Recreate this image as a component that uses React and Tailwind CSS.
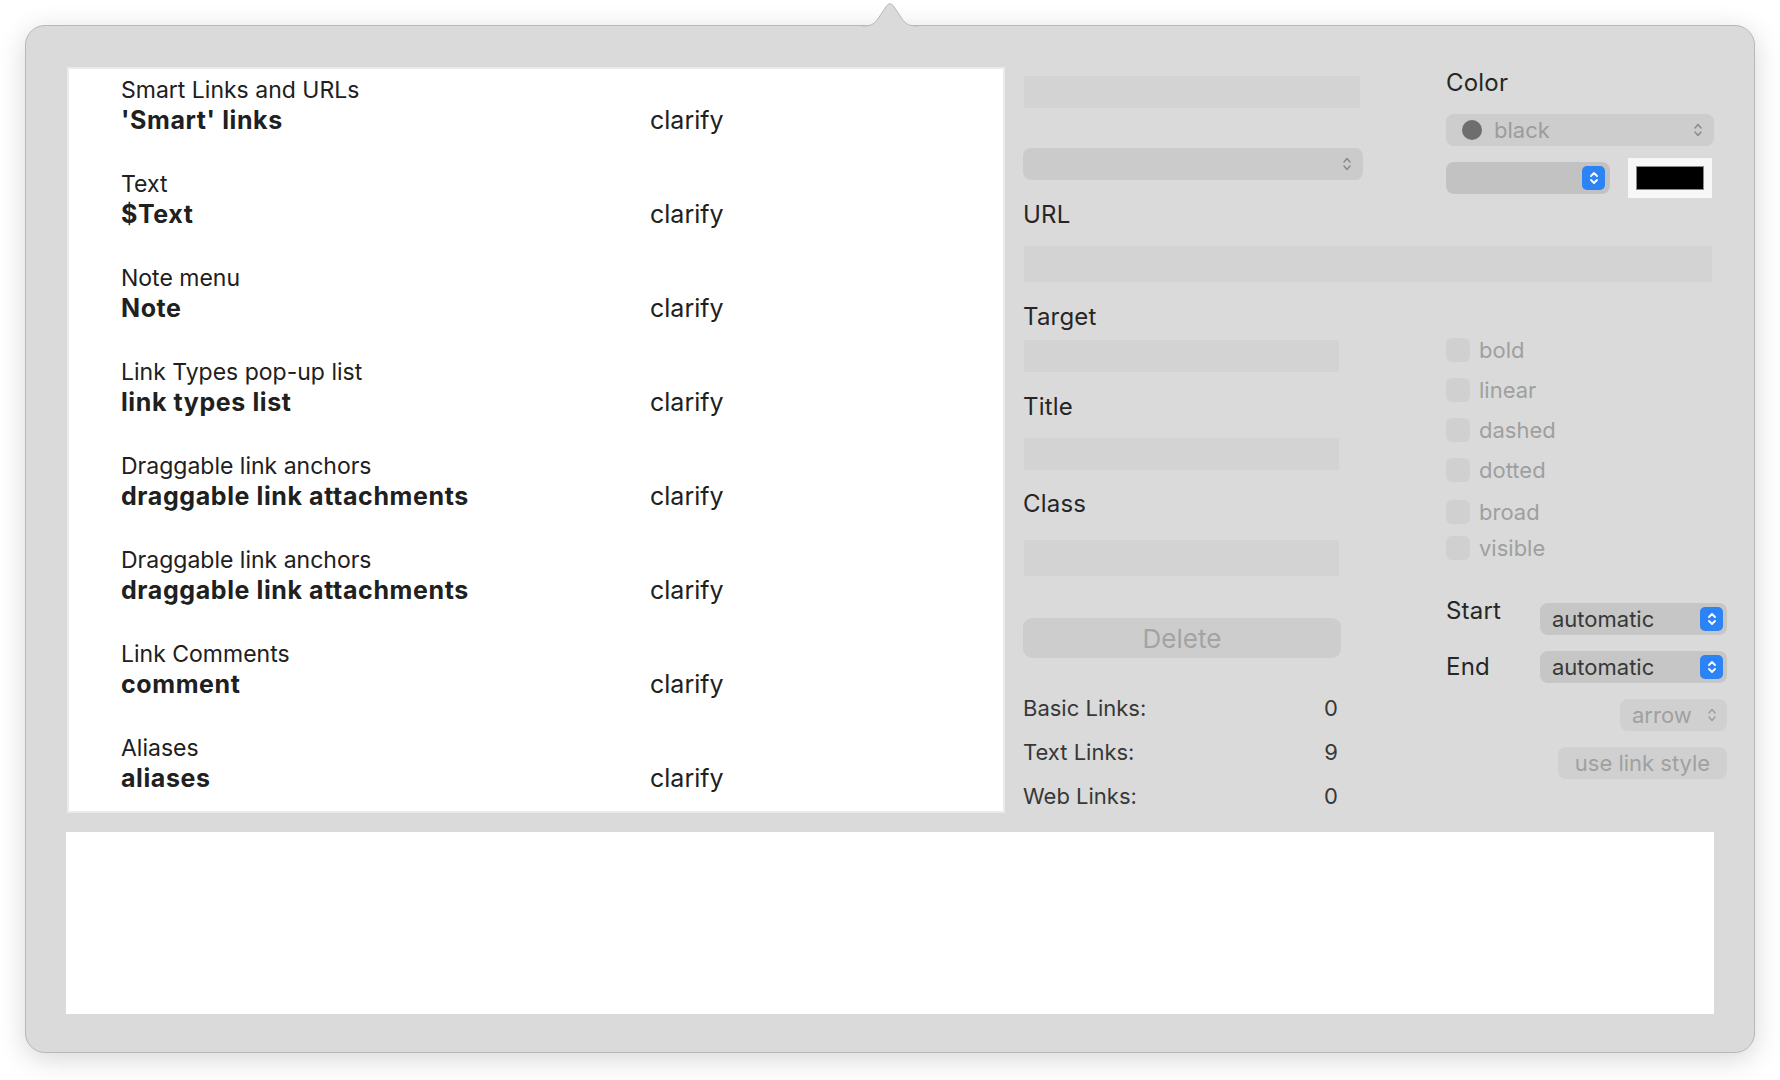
import React from 'react';

const rows = [
    { label: 'Smart Links and URLs', name: "'Smart' links" },
    { label: 'Text', name: '$Text' },
    { label: 'Note menu', name: 'Note' },
    { label: 'Link Types pop-up list', name: 'link types list' },
    { label: 'Draggable link anchors', name: 'draggable link attachments' },
    { label: 'Draggable link anchors', name: 'draggable link attachments' },
    { label: 'Link Comments', name: 'comment' },
    { label: 'Aliases', name: 'aliases' },
];

const styles = [
    { name: 'bold', mt: 'mt-[56px]' },
    { name: 'linear', mt: 'mt-[16px]' },
    { name: 'dashed', mt: 'mt-[16px]' },
    { name: 'dotted', mt: 'mt-[16px]' },
    { name: 'broad', mt: 'mt-[18px]' },
    { name: 'visible', mt: 'mt-[12px]' },
];

function Chevrons({ className = '' }) {
    return (
        <svg className={className} width="10" height="18" viewBox="0 0 10 18" fill="none">
            <path d="M2 7L5 3.5L8 7" stroke="currentColor" strokeWidth="1.6" strokeLinecap="round" strokeLinejoin="round" />
            <path d="M2 11L5 14.5L8 11" stroke="currentColor" strokeWidth="1.6" strokeLinecap="round" strokeLinejoin="round" />
        </svg>
    );
}

function BlueStepper() {
    return (
        <div className="w-[23px] h-[24px] rounded-[5px] bg-[#2b83f6] flex items-center justify-center text-white">
            <svg width="10" height="16" viewBox="0 0 10 16" fill="none">
                <path d="M2 6L5 3L8 6" stroke="currentColor" strokeWidth="1.8" strokeLinecap="round" strokeLinejoin="round" />
                <path d="M2 10L5 13L8 10" stroke="currentColor" strokeWidth="1.8" strokeLinecap="round" strokeLinejoin="round" />
            </svg>
        </div>
    );
}

function Label({ children, className = '' }) {
    return <div className={`text-[24px] leading-[30px] text-[#262626] tracking-[0.2px] ${className}`}>{children}</div>;
}

function Field({ className = '' }) {
    return <div className={`bg-[#d3d3d3] ${className}`}></div>;
}

export default function App() {
    return (
        <div className="w-[1780px] h-[1080px] bg-white pt-[25px] pl-[25px] font-['Inter',sans-serif]">
            {/* popover panel */}
            <div className="relative w-[1730px] h-[1028px] bg-[#dadada] border border-[#b8b8b8] rounded-[20px] shadow-[0_6px_28px_rgba(0,0,0,0.16)] pt-[41px] pl-[40px]">
                <svg className="absolute left-[836px] top-[-24px]" width="56" height="25" viewBox="0 0 56 25">
                    <path d="M0 25V24C8 24 12 23 16.5 16L24.5 4Q28 -0.5 31.5 4L39.5 16C44 23 48 24 56 24V25Z" fill="#dadada" />
                    <path d="M0 24C8 24 12 23 16.5 16L24.5 4Q28 -0.5 31.5 4L39.5 16C44 23 48 24 56 24" fill="none" stroke="#b8b8b8" strokeWidth="1" />
                </svg>

                <div className="flex items-start h-[746px]">
                    {/* link list */}
                    <div className="ml-[1px] w-[938px] h-[746px] bg-white border-2 border-[#ebebeb] pl-[52px] pt-[6px] text-[#202020]">
                        {rows.map((row, i) => (
                            <div key={i} className="h-[94px]">
                                <div className="text-[23px] leading-[30px]">{row.label}</div>
                                <div className="flex leading-[30px]">
                                    <div className="w-[529px] text-[25px] font-bold tracking-[0.6px]">{row.name}</div>
                                    <div className="text-[25px]">clarify</div>
                                </div>
                            </div>
                        ))}
                    </div>

                    {/* inspector */}
                    <div className="ml-[18px] w-[704px]">
                        <div className="flex h-[133px]">
                            <div className="w-[340px]">
                                <Field className="mt-[9px] ml-[1px] w-[336px] h-[32px]" />
                                <div className="mt-[40px] w-[340px] h-[32px] rounded-[8px] bg-[#cbcbcb] flex items-center justify-end pr-[11px] text-[#8c8c8c]">
                                    <Chevrons />
                                </div>
                            </div>
                            <div className="ml-auto w-[281px]">
                                <Label className="mt-[1px]">Color</Label>
                                <div className="mt-[16px] w-[268px] h-[32px] rounded-[8px] bg-[#cdcdcd] flex items-center pl-[16px] pr-[11px]">
                                    <div className="w-[20px] h-[20px] rounded-full bg-[#6e6e6e]"></div>
                                    <div className="ml-[12px] text-[22px] text-[#9c9c9c]">black</div>
                                    <Chevrons className="ml-auto text-[#8c8c8c]" />
                                </div>
                                <div className="mt-[12px] flex items-center">
                                    <div className="w-[164px] h-[32px] rounded-[8px] bg-[#c2c2c2] flex items-center justify-end pr-[5px]">
                                        <BlueStepper />
                                    </div>
                                    <div className="ml-[18px] w-[84px] h-[40px] bg-[#f7f7f7] px-[8px] py-[8px]">
                                        <div className="w-full h-full bg-black border border-[#8a8a8a]"></div>
                                    </div>
                                </div>
                            </div>
                        </div>

                        <Label>URL</Label>
                        <Field className="mt-[16px] ml-[1px] w-[688px] h-[36px]" />

                        <div className="flex">
                            <div className="w-[340px]">
                                <Label className="mt-[20px]">Target</Label>
                                <Field className="mt-[8px] ml-[1px] w-[315px] h-[32px]" />
                                <Label className="mt-[20px]">Title</Label>
                                <Field className="mt-[16px] ml-[1px] w-[315px] h-[32px]" />
                                <Label className="mt-[19px]">Class</Label>
                                <Field className="mt-[21px] ml-[1px] w-[315px] h-[36px]" />
                                <div className="mt-[42px] w-[318px] h-[40px] rounded-[9px] bg-[#cdcdcd] flex items-center justify-center text-[26px] text-[#a3a3a3]">
                                    Delete
                                </div>
                                <div className="mt-[28px] w-[315px] text-[22px] leading-[44px] text-[#383838]">
                                    <div className="flex justify-between"><span>Basic Links:</span><span>0</span></div>
                                    <div className="flex justify-between"><span>Text Links:</span><span>9</span></div>
                                    <div className="flex justify-between"><span>Web Links:</span><span>0</span></div>
                                </div>
                            </div>

                            <div className="ml-auto w-[281px] flex flex-col">
                                {styles.map((s) => (
                                    <div key={s.name} className={`${s.mt} h-[24px] flex items-center`}>
                                        <div className="w-[24px] h-[24px] rounded-[6px] bg-[#d0d0d0]"></div>
                                        <div className="ml-[9px] text-[22px] text-[#9f9f9f]">{s.name}</div>
                                    </div>
                                ))}
                                <div className="mt-[43px] flex items-start justify-between">
                                    <Label className="-mt-[7px]">Start</Label>
                                    <div className="w-[187px] h-[32px] rounded-[8px] bg-[#c6c6c6] flex items-center pl-[12px] pr-[4px] text-[22px] text-[#383838]">
                                        automatic
                                        <div className="ml-auto"><BlueStepper /></div>
                                    </div>
                                </div>
                                <div className="mt-[16px] flex items-center justify-between">
                                    <Label>End</Label>
                                    <div className="w-[187px] h-[32px] rounded-[8px] bg-[#c6c6c6] flex items-center pl-[12px] pr-[4px] text-[22px] text-[#383838]">
                                        automatic
                                        <div className="ml-auto"><BlueStepper /></div>
                                    </div>
                                </div>
                                <div className="mt-[16px] self-end w-[107px] h-[32px] rounded-[8px] bg-[#d0d0d0] flex items-center pl-[12px] pr-[10px] text-[22px] text-[#a0a0a0]">
                                    arrow
                                    <Chevrons className="ml-auto text-[#a0a0a0]" />
                                </div>
                                <div className="mt-[16px] self-end w-[169px] h-[32px] rounded-[8px] bg-[#d0d0d0] flex items-center justify-center text-[22px] text-[#a0a0a0]">
                                    use link style
                                </div>
                            </div>
                        </div>
                    </div>
                </div>

                {/* note text area */}
                <div className="mt-[19px] w-[1648px] h-[182px] bg-white"></div>
            </div>
        </div>
    );
}
